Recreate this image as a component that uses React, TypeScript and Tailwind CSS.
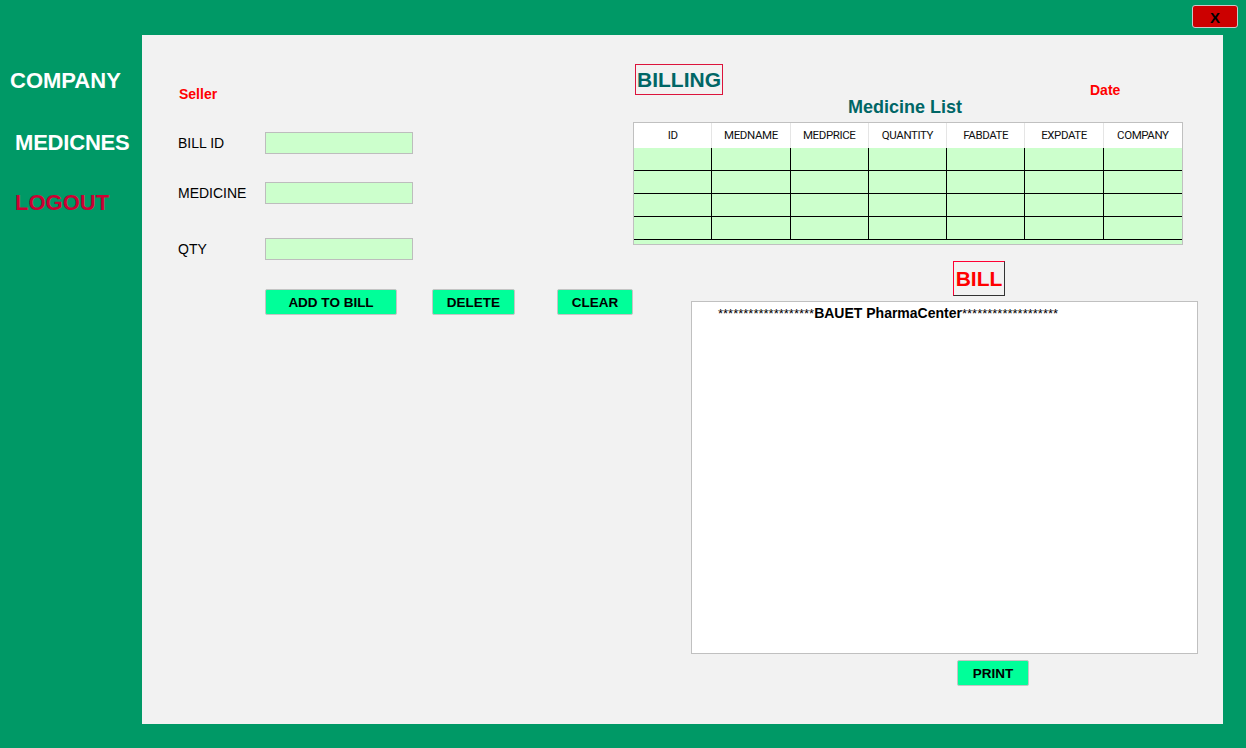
import React from 'react';

const columns = ['ID', 'MEDNAME', 'MEDPRICE', 'QUANTITY', 'FABDATE', 'EXPDATE', 'COMPANY'];
const rows = [0, 1, 2, 3];

function Field({ label, className }: { label: string; className?: string }) {
  return (
    <div className={`flex items-center ${className ?? ''}`}>
      <span className="w-[87px] text-[14px] text-black">{label}</span>
      <div className="w-[148px] h-[22px] bg-[#ccffcc] border border-[#bdbdbd]" />
    </div>
  );
}

function GreenButton({ label, className }: { label: string; className?: string }) {
  return (
    <button
      className={`h-[26px] pt-[2px] bg-[#00ff99] border border-[#c4c4c4] rounded-[2px] text-[13.5px] font-bold text-black leading-none ${className ?? ''}`}
    >
      {label}
    </button>
  );
}

export default function App() {
  const stars = '*******************';

  return (
    <div
      className="w-[1246px] h-[748px] bg-[#009966] flex flex-col overflow-hidden"
      style={{ fontFamily: '"Liberation Sans", Arial, sans-serif' }}
    >
      {/* Title bar */}
      <div className="h-[35px] flex justify-end items-start pt-[5px] pr-[8px]">
        <button className="w-[46px] h-[23px] pt-[1px] bg-[#cc0000] border border-[#c8c8c8] rounded-[3px] text-[15px] font-bold text-black leading-none">
          X
        </button>
      </div>

      <div className="flex">
        {/* Sidebar */}
        <div className="w-[142px] flex flex-col pt-[33px] text-[22px] font-bold leading-[25px]">
          <span className="pl-[10px] text-white">COMPANY</span>
          <span className="pl-[15px] mt-[37px] text-white tracking-[-0.2px]">MEDICNES</span>
          <span className="pl-[15px] mt-[35px] text-[#cc0033]">LOGOUT</span>
        </div>

        {/* Panel */}
        <div className="w-[1081px] h-[689px] bg-[#f2f2f2] flex">
          {/* Form */}
          <div className="w-[491px] pl-[36px] pt-[51px] flex flex-col">
            <span className="pl-[1px] text-[14px] font-bold leading-[16px] text-[#ff0000]">Seller</span>
            <Field label="BILL ID" className="mt-[30px]" />
            <Field label="MEDICINE" className="mt-[28px]" />
            <Field label="QTY" className="mt-[34px]" />
            <div className="flex mt-[29px] ml-[87px]">
              <GreenButton label="ADD TO BILL" className="w-[132px]" />
              <GreenButton label="DELETE" className="w-[83px] ml-[35px]" />
              <GreenButton label="CLEAR" className="w-[76px] ml-[42px]" />
            </div>
          </div>

          {/* Billing side */}
          <div className="flex flex-col pt-[29px]">
            <div className="flex items-start h-[31px]">
              <div className="ml-[2px] w-[88px] h-[31px] border border-[#dc143c] flex items-center justify-center text-[21px] font-bold text-[#006666]">
                BILLING
              </div>
              <span className="ml-[367px] mt-[18px] text-[14px] font-bold leading-[16px] text-[#ff0000]">Date</span>
            </div>

            <div className="w-[550px] pr-[6px] mt-[1px] text-center text-[18px] font-bold leading-[22px] text-[#006666]">
              Medicine List
            </div>

            {/* Table */}
            <div className="mt-[4px] w-[550px] h-[123px] border border-[#c0c0c0] bg-[#ccffcc] flex flex-col">
              <div
                className="grid grid-cols-7 h-[25px] bg-white"
                style={{ fontFamily: 'Roboto, "Noto Sans", sans-serif' }}
              >
                {columns.map((c, i) => (
                  <div
                    key={c}
                    className={`flex items-center justify-center text-[11.5px] tracking-[-0.4px] text-[#111111] ${
                      i < columns.length - 1 ? 'border-r border-[#e5e5e5]' : ''
                    }`}
                  >
                    {c}
                  </div>
                ))}
              </div>
              {rows.map((r) => (
                <div key={r} className="grid grid-cols-7 h-[23px] border-b border-black">
                  {columns.map((c, i) => (
                    <div key={c} className={i < columns.length - 1 ? 'border-r border-black' : ''} />
                  ))}
                </div>
              ))}
            </div>

            {/* Bill */}
            <div
              className="mt-[16px] ml-[320px] w-[52px] h-[35px] border-t border-l border-[#ff0033] border-r border-b border-r-[#333333] border-b-[#333333] flex items-center justify-center text-[21px] font-bold text-[#ff0000]"
            >
              BILL
            </div>

            <div className="mt-[5px] ml-[58px] w-[507px] h-[353px] bg-white border border-[#c0c0c0] pl-[26px] pt-[2px]">
              <p className="text-black leading-[18px] whitespace-nowrap">
                <span className="text-[13px]">{stars}</span>
                <span className="text-[14px] font-bold">BAUET PharmaCenter</span>
                <span className="text-[13px]">{stars}</span>
              </p>
            </div>

            <GreenButton label="PRINT" className="mt-[6px] ml-[324px] w-[72px]" />
          </div>
        </div>
      </div>
    </div>
  );
}
